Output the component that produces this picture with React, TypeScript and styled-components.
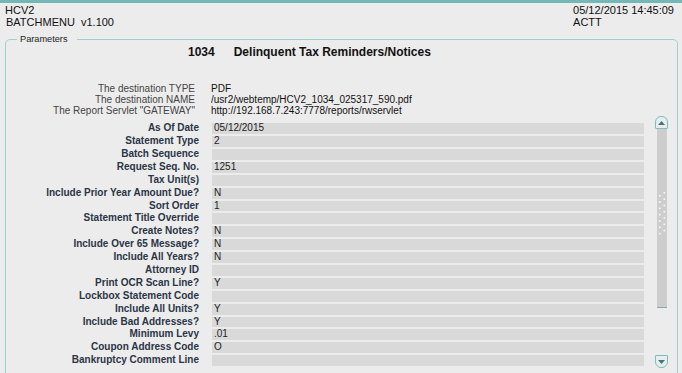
import React from 'react';
import styled, { createGlobalStyle } from 'styled-components';

const GlobalStyle = createGlobalStyle`
  html, body {
    margin: 0;
    padding: 0;
    background: #ececec;
    overflow: hidden;
  }
  body {
    font-family: "Liberation Sans", Arial, sans-serif;
    color: #111;
  }
`;

type Param = { label: string; value?: string };

const destinations: Param[] = [
  { label: 'The destination TYPE', value: 'PDF' },
  { label: 'The destination NAME', value: '/usr2/webtemp/HCV2_1034_025317_590.pdf' },
  { label: 'The Report Servlet "GATEWAY"', value: 'http://192.168.7.243:7778/reports/rwservlet' },
];

const params: Param[] = [
  { label: 'As Of Date', value: '05/12/2015' },
  { label: 'Statement Type', value: '2' },
  { label: 'Batch Sequence' },
  { label: 'Request Seq. No.', value: '1251' },
  { label: 'Tax Unit(s)' },
  { label: 'Include Prior Year Amount Due?', value: 'N' },
  { label: 'Sort Order', value: '1' },
  { label: 'Statement Title Override' },
  { label: 'Create Notes?', value: 'N' },
  { label: 'Include Over 65 Message?', value: 'N' },
  { label: 'Include All Years?', value: 'N' },
  { label: 'Attorney ID' },
  { label: 'Print OCR Scan Line?', value: 'Y' },
  { label: 'Lockbox Statement Code' },
  { label: 'Include All Units?', value: 'Y' },
  { label: 'Include Bad Addresses?', value: 'Y' },
  { label: 'Minimum Levy', value: '.01' },
  { label: 'Coupon Address Code', value: 'O' },
  { label: 'Bankruptcy Comment Line' },
];

export default function App() {
  return (
    <>
      <GlobalStyle />
      <Page>
        <TitleBar />
        <Header>
          <HeaderCol>
            <HeaderLine>HCV2</HeaderLine>
            <HeaderLine indent>BATCHMENU&nbsp; v1.100</HeaderLine>
          </HeaderCol>
          <HeaderCol>
            <HeaderLine>05/12/2015 14:45:09</HeaderLine>
            <HeaderLine>ACTT</HeaderLine>
          </HeaderCol>
        </Header>

        <Fieldset>
          <Legend>Parameters</Legend>
          <ReportTitle>
            <span>1034</span>
            <span>Delinquent Tax Reminders/Notices</span>
          </ReportTitle>

          <DestList>
            {destinations.map(d => (
              <React.Fragment key={d.label}>
                <DestLabel>{d.label}</DestLabel>
                <DestValue>{d.value}</DestValue>
              </React.Fragment>
            ))}
          </DestList>

          <FormArea>
            <ParamGrid>
              {params.map(p => (
                <React.Fragment key={p.label}>
                  <ParamLabel>{p.label}</ParamLabel>
                  <ParamInput>{p.value}</ParamInput>
                </React.Fragment>
              ))}
            </ParamGrid>
            <ScrollBar>
              <ScrollButton dir="up">
                <svg width="7" height="4" viewBox="0 0 7 4">
                  <polygon points="0,4 7,4 3.5,0" fill="#4d7474" />
                </svg>
              </ScrollButton>
              <Thumb>
                <svg width="10" height="46" viewBox="0 0 10 46">
                  {[0, 1, 2, 3, 4, 5, 6].map(i => (
                    <g key={i} fill="#f4fbfb">
                      <rect x="6.5" y={i * 6.3} width="1.6" height="1.6" />
                      <rect x="2" y={i * 6.3 + 3} width="1.6" height="1.6" />
                    </g>
                  ))}
                </svg>
              </Thumb>
              <ScrollSpace />
              <ScrollButton dir="down">
                <svg width="7" height="4" viewBox="0 0 7 4">
                  <polygon points="0,0 7,0 3.5,4" fill="#4d7474" />
                </svg>
              </ScrollButton>
            </ScrollBar>
          </FormArea>
        </Fieldset>
      </Page>
    </>
  );
}

const Page = styled.div`
  width: 682px;
  height: 373px;
  overflow: hidden;
`;

const TitleBar = styled.div`
  height: 3px;
  background: #74b8b5;
`;

const Header = styled.div`
  display: flex;
  justify-content: space-between;
  padding: 2px 8px 0 5px;
  font-size: 11px;
  color: #111;
`;

const HeaderCol = styled.div`
  display: flex;
  flex-direction: column;
`;

const HeaderLine = styled.div<{ indent?: boolean }>`
  line-height: 11.6px;
  white-space: nowrap;
  padding-left: ${p => (p.indent ? '1px' : '0')};
`;

const Fieldset = styled.fieldset`
  margin: 6px 4px 0 5px;
  padding: 0 8px 40px 0;
  border: 1px solid #9fd0cf;
  border-radius: 5px 5px 0 0;
  min-width: 0;
`;

const Legend = styled.legend`
  margin-left: 11px;
  padding: 0 9px 0 3px;
  font-size: 9.2px;
  line-height: 11px;
  color: #222;
`;

const ReportTitle = styled.div`
  display: flex;
  gap: 19px;
  padding-left: 182px;
  font-size: 12px;
  font-weight: bold;
  line-height: 14px;
  color: #111;
`;

const DestList = styled.div`
  display: grid;
  grid-template-columns: 189px 1fr;
  column-gap: 16px;
  margin-top: 25px;
  font-size: 10px;
  line-height: 10px;
`;

const DestLabel = styled.div`
  height: 11px;
  overflow: hidden;
  text-align: right;
  color: #444;
  white-space: nowrap;
`;

const DestValue = styled.div`
  height: 9.8px;
  margin-bottom: 1.2px;
  overflow: hidden;
  color: #111;
  white-space: nowrap;
`;

const FormArea = styled.div`
  display: flex;
  align-items: flex-start;
  gap: 11px;
`;

const ParamGrid = styled.div`
  display: grid;
  grid-template-columns: 193px 432px;
  grid-auto-rows: 10.9px;
  column-gap: 13px;
  row-gap: 2px;
  padding-top: 6px;
  font-size: 10px;
  line-height: 10.9px;
`;

const ParamLabel = styled.div`
  text-align: right;
  font-weight: bold;
  color: #2a3546;
  white-space: nowrap;
`;

const ParamInput = styled.div`
  background: #d9d9d9;
  padding-left: 2px;
  color: #222;
  white-space: nowrap;
  overflow: hidden;
`;

const ScrollBar = styled.div`
  width: 13px;
  margin-top: -1px;
  display: flex;
  flex-direction: column;
  align-items: center;
`;

const ScrollButton = styled.div<{ dir: 'up' | 'down' }>`
  box-sizing: border-box;
  width: 13px;
  height: 13px;
  display: flex;
  align-items: center;
  justify-content: center;
  background: #e4eeee;
  border: 1px solid #7fbdbb;
  border-radius: ${p => (p.dir === 'up' ? '6px 6px 1px 1px' : '1px 1px 6px 6px')};
`;

const Thumb = styled.div`
  box-sizing: border-box;
  width: 10px;
  height: 179px;
  background: #cdcdcd;
  border-bottom: 1px solid #8fa9a9;
  display: flex;
  justify-content: center;
  padding-top: 63px;
`;

const ScrollSpace = styled.div`
  height: 47px;
`;
